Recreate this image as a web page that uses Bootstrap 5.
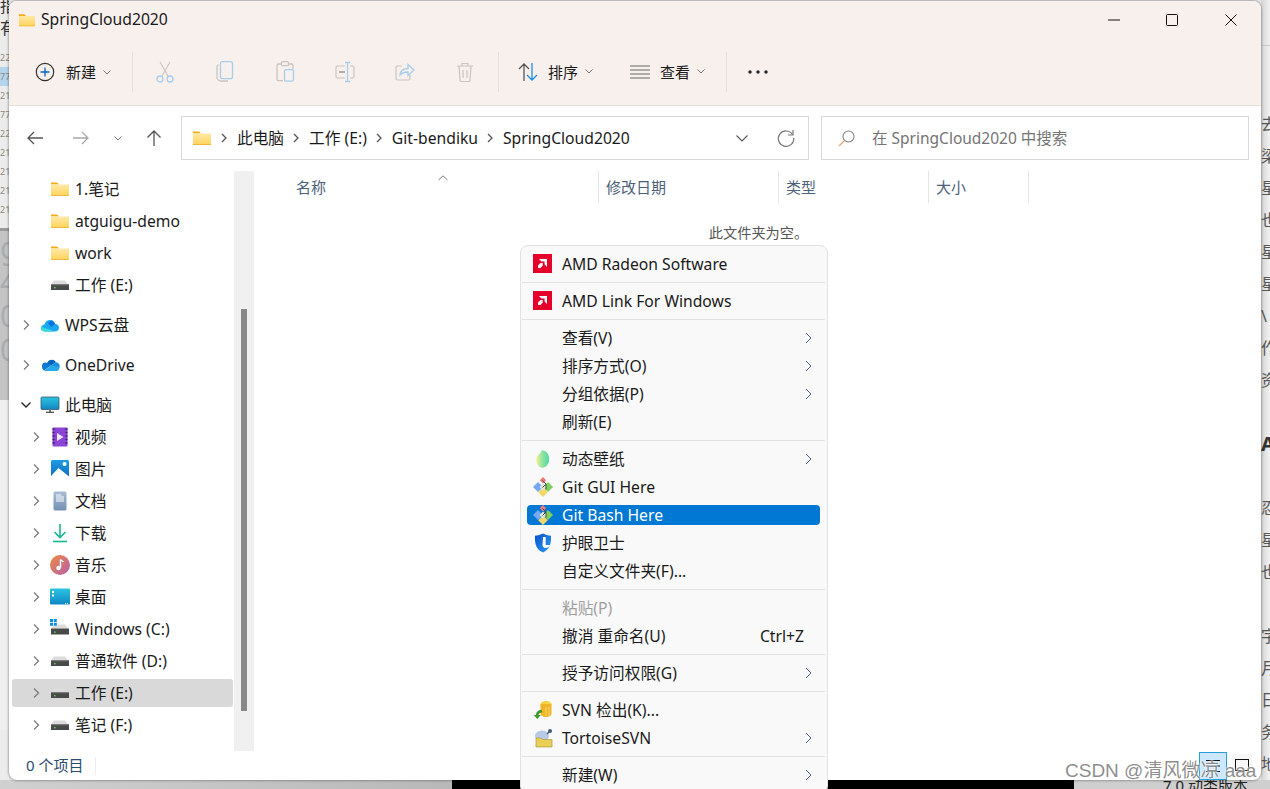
<!DOCTYPE html>
<html lang="zh-CN">
<head>
  <meta charset="UTF-8" />
  <meta name="viewport" content="width=device-width, initial-scale=1.0" />
  <title>SpringCloud2020</title>
  <link href="https://cdn.jsdelivr.net/npm/bootstrap@5.3.0/dist/css/bootstrap.min.css" rel="stylesheet">
  <style>
    html, body { height: 789px; overflow: hidden; }
    body { background: #e6e6e6; font-family: "Noto Sans", "Noto Sans CJK SC", sans-serif; font-size: 15.7px; color: #1a1a1a; }
    svg { display: block; flex: none; overflow: visible; }

    /* desktop behind the window */
    .desk { width: 1270px; height: 789px; position: relative; overflow: hidden; }
    .back-left { position: absolute; left: 0; top: 0; width: 9px; height: 789px; overflow: hidden; background: #ececec; white-space: nowrap; }
    .back-left div { overflow: hidden; }
    .frag-top { height: 53px; margin-top: -5px; font-size: 16px; line-height: 22px; color: #333; }
    .frag-num { height: 19px; font-size: 9px; line-height: 19px; color: #8d8a80; }
    .frag-sel { background: #b5d5ef; }
    .frag-gray { height: 172px; margin-top: 9px; background: #c4c4c4; border-top: 3px solid #9a9a9a; color: #a9adb2; font-size: 30px; line-height: 34px; }
    .frag-low { height: 330px; background: #f0f0f0; }
    .back-right { position: absolute; right: 0; top: 0; width: 9px; height: 789px; overflow: hidden; background: linear-gradient(90deg, #d4d4d4, #f2f2f2); color: #555; font-size: 16px; line-height: 32px; }
    .back-right div { height: 32px; }
    .back-right .rule-top { height: 46px; border-bottom: 1px solid #c8c8c8; margin-bottom: 62px; }
    .back-right b { font-size: 20px; color: #333; }
    .back-bottom { position: absolute; left: 0; bottom: 0; width: 1270px; height: 9px; display: flex; background: #bdbdbd; overflow: hidden; }
    .strip-gray { width: 452px; background: linear-gradient(90deg, #d0d0d0, #b8b8b8); }
    .strip-black { width: 622px; background: #000; }
    .strip-rest { flex: 1; background: #cfcfcf; font-size: 15px; line-height: 10px; color: #222; padding-left: 89px; white-space: nowrap; }

    /* explorer window */
    .win { position: absolute; left: 9px; top: 1px; width: 1252px; height: 779px; background: #fff; border-radius: 8px; box-shadow: 0 0 3px rgba(0,0,0,.55); overflow: hidden; display: flex; flex-direction: column; }
    .win-head { background: #f8f0ed; height: 105px; border-bottom: 1px solid #e4dedb; flex: none; }
    .title-row { height: 37px; padding: 0 1px 0 9px; }
    .title-text { margin-left: 5px; padding-top: 1px; }
    .win-ctl { width: 58.5px; height: 37px; }
    .tool-row { height: 67px; padding: 0 0 0 26px; font-size: 15px; }
    .tool-new { width: 97px; gap: 11px; }
    .tool-sep { width: 1px; height: 40px; background: #e6dfdc; flex: none; }
    .tool-ico { width: 60px; }
    .tool-first { margin-left: 2px; }
    .sep-b { margin-left: 3px; }
    .tool-cmd { gap: 10px; }
    .tool-new .tool-cmd, .tool-cmd span { padding-top: 2px; }
    .caret-mini { margin-left: -3px; }
    .cmd-sort { margin-left: 19px; }
    .cmd-view { margin-left: 37px; margin-right: 21px; }
    .more-dots { margin-left: 21px; }
    .addr-row { height: 65px; flex: none; padding-top: 10px; }
    .nav-a, .nav-b, .nav-c, .nav-d { height: 44px; }
    .nav-a { width: 52px; }
    .nav-b { width: 40px; }
    .nav-c { width: 34px; }
    .nav-d { width: 38px; margin-right: 8px; }
    .addr-box { width: 628px; height: 44px; border: 1px solid #d9d9d9; padding-left: 10px; }
    .addr-box span { padding-top: 2px; }
    .crumb { margin: 0 10px 0 9px; }
    .addr-drop { margin-right: 29px; }
    .addr-refresh { margin-right: 13px; }
    .search-box { width: 428px; height: 44px; border: 1px solid #d9d9d9; margin-left: 12px; padding-left: 16px; color: #757575; font-size: 15.5px; }
    .search-box span { margin-left: 17px; padding-top: 2px; }
    .win-body { flex: 1; min-height: 0; }
    .side { width: 225px; padding-top: 2px; flex: none; display: flex; flex-direction: column; }
    .tree-row { height: 28px; margin: 2px 0 2px 3px; padding-top: 2px; width: 221px; border-radius: 3px; flex: none; }
    .tree-row.lv0 { padding-left: 9px; }
    .tree-row.lv1 { padding-left: 19px; }
    .tree-row .chev-box { width: 10px; margin: -2px 9px 0 0; flex: none; }
    .tree-row .ico-box { width: 20px; margin: -2px 5px 0 0; flex: none; }
    .tree-row.on { background: #d9d9d9; }
    .group-gap { margin-top: 10px; }
    .scroll-track { width: 20px; background: #f0f0f0; padding: 138px 7px 40px; flex: none; }
    .scroll-thumb { width: 6px; height: 402px; background: #888; }
    .files { flex: 1; min-width: 0; padding-left: 2px; }
    .col-head { height: 32px; color: #4c607a; font-size: 15px; }
    .col-cell { border-right: 1px solid #e5e5e5; padding-left: 7px; display: flex; align-items: center; position: relative; }
    .col-name { width: 343px; padding-left: 40px; }
    .col-date { width: 180px; }
    .col-type { width: 150px; }
    .col-size { width: 100px; }
    .sort-up { position: absolute; left: 182px; top: 0; }
    .empty-note { font-size: 14.2px; color: #555; margin-top: 19px; }
    .status-bar { height: 29px; flex: none; padding-left: 17px; color: #2b4a6f; font-size: 15px; }
    .status-sep { width: 1px; height: 18px; background: #eee; margin-left: 12px; }
    .view-on { width: 28px; height: 28px; background: #cce8ff; border: 1px solid #2a9bdb; }
    .view-off { width: 20px; height: 24px; margin: 0 9px 0 5px; background: #f7f7f7; }

    /* context menu */
    .ctx { position: absolute; left: 520px; top: 245px; width: 308px; background: #f9f9f9; border: 1px solid #e2e2e2; border-radius: 8px; }
    .ctx-sec { padding: 4px 0; position: relative; display: flex; flex-direction: column; }
    .ctx-sec + .ctx-sec::before { content: ""; position: absolute; left: 1px; right: 2px; top: -1px; height: 1px; background: #e2e2e2; }
    .ctx-sec + .ctx-sec { margin-top: 1px; }
    .ctx-item { height: 20px; margin: 4px 7px 4px 6px; padding: 2px 8px 0 0; border-radius: 4px; flex: none; }
    .ctx-item > svg { margin-top: -2px; }
    .ctx-ico { width: 20px; margin: -2px 9px 0 6px; flex: none; }
    .ctx-item.hot { background: #0078d4; color: #fff; }
    .ctx-item.off { color: #a0a0a0; }
    .ctx-key { margin-right: 8px; }

    .mark-csdn { position: absolute; left: 1065px; top: 759px; font-family: "Liberation Sans", "Noto Sans CJK SC", sans-serif; font-size: 19px; line-height: 24px; color: rgba(120,120,120,.85); text-shadow: 0 0 2px #fff, 0 0 2px #fff; white-space: nowrap; }
  </style>
</head>
<body>

<svg width="0" height="0" class="position-absolute">
  <defs>
    <linearGradient id="g-folder" x1="0" y1="0" x2="0" y2="1"><stop offset="0" stop-color="#ffe9a6"/><stop offset="1" stop-color="#ffd35c"/></linearGradient>
    <linearGradient id="g-mon" x1="0" y1="0" x2="0" y2="1"><stop offset="0" stop-color="#2cc5e0"/><stop offset="1" stop-color="#0f86c4"/></linearGradient>
    <linearGradient id="g-music" x1="0" y1="0" x2="1" y2="1"><stop offset="0" stop-color="#f28a3c"/><stop offset="1" stop-color="#b25fb0"/></linearGradient>
    <linearGradient id="g-doc" x1="0" y1="0" x2="0" y2="1"><stop offset="0" stop-color="#a9bcd4"/><stop offset="1" stop-color="#7390b3"/></linearGradient>
    <linearGradient id="g-pic" x1="0" y1="0" x2="0" y2="1"><stop offset="0" stop-color="#1f9be4"/><stop offset="1" stop-color="#0f6cbc"/></linearGradient>
    <linearGradient id="g-leaf" x1="0" y1="0" x2="1" y2="0"><stop offset="0" stop-color="#f3f08a"/><stop offset=".55" stop-color="#7fe3a5"/><stop offset="1" stop-color="#58d8a0"/></linearGradient>
    <linearGradient id="g-shield" x1="0" y1="0" x2="1" y2="1"><stop offset="0" stop-color="#0a4fd0"/><stop offset="1" stop-color="#2aa0f0"/></linearGradient>
    <filter id="f-soft"><feGaussianBlur stdDeviation=".7"/></filter>

    <symbol id="i-folder" viewBox="0 0 20 20">
      <path d="M1 3.500h6l2 2H1z" fill="#f5ab16"/>
      <path d="M1 5.500h18v11.500H1z" fill="url(#g-folder)"/>
      <path d="M1 16h18v1H1z" fill="#f0b73a"/>
    </symbol>
    <symbol id="i-drive" viewBox="0 0 20 20">
      <path d="M3.500 5.500h11.500l3.500 4H1.500z" fill="#dcdcdc"/>
      <path d="M1 9h18v6H1z" fill="#4a4a4a"/>
      <path d="M1 9h18v1.200H1z" fill="#7a7a7a"/>
      <rect x="4" y="12" width="1.600" height="1.400" fill="#3fe04a"/>
    </symbol>
    <symbol id="i-win-drive" viewBox="0 0 20 20">
      <path d="M6 5.500h9l3.500 4H1.500l2-2.500z" fill="#dcdcdc"/>
      <path d="M1 9.500h18v6H1z" fill="#4a4a4a"/>
      <rect x="4" y="12.500" width="1.600" height="1.400" fill="#3fe04a"/>
      <path d="M0 0h3v3H0zM3.800 0h3v3h-3zM0 3.800h3v3H0zM3.800 3.800h3v3h-3z" fill="#0f8fe0"/>
    </symbol>
    <symbol id="i-wps" viewBox="0 0 20 20">
      <path d="M5 16.500c-5 0-5.500-6-.5-7 .8-3.500 5-6 8-3.500 1-.2 2.500 1 2.500 3 5-.5 5.500 7.500 0 7.500z" fill="#1aa8f0"/>
      <path d="M5 16.500c-3 0-5-3-3.500-5 3 2 8 2 12 5z" fill="#38d9d9"/>
      <path d="M8 8l4-3 3 4-4 3z" fill="#0a6fe0"/>
    </symbol>
    <symbol id="i-onedrive" viewBox="0 0 20 20">
      <path d="M7 8c1.500-4 7-4.500 9-.8l-5 3.300-4-1.700z" fill="#0364b8"/>
      <path d="M2 11c-.2-3 3-4.500 5.500-3l3.500 2.500-7 5c-1.500-.5-2-2.500-2-4.500z" fill="#0f78d4"/>
      <path d="M11 10.500l5-3.300c2.500.2 4 2.200 3.700 4.500L15 15z" fill="#1490df"/>
      <path d="M4 16c-.5 0 7-5.500 7-5.500l8.700 1.200c-.2 2-1 4.300-3.700 4.300z" fill="#28a8ea"/>
    </symbol>
    <symbol id="i-pc" viewBox="0 0 20 20">
      <rect x="1" y="2" width="18" height="12.500" rx="1" fill="url(#g-mon)" stroke="#3d5565" stroke-width=".8"/>
      <path d="M9 14.500h2v2.500H9z" fill="#6a7a88"/>
      <path d="M6 17.300h8" stroke="#444" stroke-width="1.200"/>
    </symbol>
    <symbol id="i-video" viewBox="0 0 20 20">
      <rect x="2.500" y="0.500" width="15" height="19" rx="1" fill="#8b44d6"/>
      <path d="M2.500 2h2M2.500 5.500h2M2.500 9h2M2.500 12.500h2M2.500 16h2M15.500 2h2M15.500 5.500h2M15.500 9h2M15.500 12.500h2M15.500 16h2" stroke="#3d1b72" stroke-width="1.400"/>
      <path d="M7 6l6.500 4L7 14z" fill="#efe6fb"/>
    </symbol>
    <symbol id="i-pic" viewBox="0 0 20 20">
      <rect x="1" y="1" width="18" height="18" rx="1.500" fill="url(#g-pic)"/>
      <circle cx="14.500" cy="5" r="2" fill="#fff"/>
      <path d="M1 17l7.500-8 10.500 8.500V19H1z" fill="#fff"/>
    </symbol>
    <symbol id="i-doc" viewBox="0 0 20 20">
      <rect x="3.500" y="0.500" width="13" height="19" rx="1.500" fill="url(#g-doc)"/>
      <path d="M6 4h5.500M6 6h8M6 8h8M6 10h8" stroke="#fff" stroke-width="1"/>
    </symbol>
    <symbol id="i-down" viewBox="0 0 20 20">
      <path d="M10 1v13M4.500 9l5.500 5.500L15.500 9" fill="none" stroke="#14b88e" stroke-width="1.600"/>
      <path d="M3 18.500h14" stroke="#14b88e" stroke-width="1.600"/>
    </symbol>
    <symbol id="i-music" viewBox="0 0 20 20">
      <circle cx="10" cy="10" r="10" fill="url(#g-music)"/>
      <path d="M10.500 4.500v8" stroke="#fff" stroke-width="1.500"/>
      <path d="M10.500 4.500c1 1.500 2.500 1.500 3 2.500" fill="none" stroke="#fff" stroke-width="1.300"/>
      <circle cx="8.500" cy="13" r="2.200" fill="#fff"/>
    </symbol>
    <symbol id="i-desk" viewBox="0 0 20 20">
      <rect x="0" y="1.500" width="20" height="16" rx="1" fill="url(#g-mon)"/>
      <path d="M2 4h2v2H2zM2 7.500h2v2H2z" fill="#fff"/>
      <path d="M15 16.500h1M17 16.500h1" stroke="#dff" stroke-width="1"/>
    </symbol>
    <symbol id="i-amd" viewBox="0 0 20 20">
      <rect width="19" height="19" fill="#e4002b"/>
      <path d="M6 5h8v8l-2.400-2.400V7.400H8.400z" fill="#fff"/>
      <path d="M5 11.500l2.500-2.500h2.200v2.500L7.500 14H5z" fill="#fff"/>
    </symbol>
    <symbol id="i-leaf" viewBox="0 0 20 20">
      <path d="M9 1c5 1 8 5 7 11-.8 5-5 7.500-8 6.500C5 17.500 3 14 3.500 9 4 7 6 5 7 4.500z" fill="url(#g-leaf)" filter="url(#f-soft)"/>
    </symbol>
    <symbol id="i-git" viewBox="0 0 20 20">
      <path d="M10 0l3.200 3.200-3.200 3.200-3.200-3.200z" fill="#f07a78"/>
      <path d="M5 5l5 5-5 5-5-5z" fill="#74a8f5"/>
      <path d="M15 5l5 5-5 5-5-5z" fill="#7fd05c"/>
      <path d="M10 10.500l4.800 4.800L10 20l-4.800-4.700z" fill="#f5d76a"/>
      <path d="M10 6.500l3.500 3.500L10 13.500 6.500 10z" fill="#dfe6d8"/>
      <path d="M9.500 3.500l3.500 3.500M13 7v5.500M13 7L9.500 10.500" fill="none" stroke="#4d4d4d" stroke-width="1"/>
    </symbol>
    <symbol id="i-shield" viewBox="0 0 20 20">
      <path d="M10 .5c2.500 1.300 5 2 8 2.300 .5 8-1.500 14-8 16.700C3.500 17 1.500 11 2 2.800c3-.3 5.500-1 8-2.300z" fill="url(#g-shield)"/>
      <path d="M10 4h2.700v8H17c-.5 2-2.500 3-4.500 3-2 0-3-1.500-3-3z" fill="#fff"/>
    </symbol>
    <symbol id="i-svn" viewBox="0 0 20 20">
      <ellipse cx="13" cy="4" rx="5.500" ry="3" fill="#f9d43c"/>
      <path d="M7.500 4v10c0 1.500 2.500 3 5.500 3s5.500-1.500 5.500-3V4z" fill="#efb526"/>
      <path d="M13 7v9M16 7v9" stroke="#f9e27a" stroke-width=".8"/>
      <path d="M9 10c-4 0-6 2-6 5H.8l3.500 4 3.500-4H5.500c0-1.500 1.500-2.500 3.500-2.500z" fill="#3b9a28"/>
    </symbol>
    <symbol id="i-tortoise" viewBox="0 0 20 20">
      <ellipse cx="9" cy="8" rx="7" ry="5.500" fill="#b7c9e4"/>
      <path d="M3 10h5l1.500 1.500H19V19H3z" fill="#e9cf55" stroke="#a79037" stroke-width=".6"/>
      <circle cx="17" cy="3" r="2" fill="#405a78"/>
      <path d="M14 6l2-2" stroke="#405a78" stroke-width="1.200"/>
    </symbol>
    <symbol id="i-sub" viewBox="0 0 7 12">
      <path d="M1 1l5 5-5 5" fill="none" stroke="#4a5f96" stroke-width="1"/>
    </symbol>
    <symbol id="i-tree" viewBox="0 0 10 12">
      <path d="M3 1.500L7.500 6 3 10.500" fill="none" stroke="#808080" stroke-width="1.400"/>
    </symbol>
    <symbol id="i-tree-open" viewBox="0 0 10 12">
      <path d="M.5 3.500L5 8l4.500-4.500" fill="none" stroke="#222" stroke-width="1.300"/>
    </symbol>
    <symbol id="i-caret" viewBox="0 0 8 5">
      <path d="M.5 .5L4 4 7.500 .5" fill="none" stroke="#777" stroke-width="1"/>
    </symbol>
    <symbol id="i-crumb" viewBox="0 0 6 10">
      <path d="M1 1l4 4-4 4" fill="none" stroke="#555" stroke-width="1.300"/>
    </symbol>
  </defs>
</svg>

<div class="desk">
  <div class="back-left">
    <div class="frag-top">指<br>有</div>
    <div class="frag-num">22,</div>
    <div class="frag-num frag-sel">77,</div>
    <div class="frag-num">21,</div>
    <div class="frag-num">77,</div>
    <div class="frag-num">22,</div>
    <div class="frag-num">21,</div>
    <div class="frag-num">21,</div>
    <div class="frag-num">21,</div>
    <div class="frag-num">21,</div>
    <div class="frag-gray">g<br>4<br>0<br>0</div>
    <div class="frag-low"></div>
  </div>
  <div class="back-right">
    <div class="rule-top"></div>
    <div>去</div><div>梁</div><div>星</div><div>也</div><div>星</div><div>星</div><div>\</div><div>作</div><div>资</div><div></div>
    <div><b>A</b></div><div></div><div>忍</div><div>星</div><div>也</div><div></div><div>字</div><div>月</div><div>日</div><div>务</div><div>地</div>
  </div>
  <div class="back-bottom">
    <div class="strip-gray"></div>
    <div class="strip-black"></div>
    <div class="strip-rest">7.0 动类版本</div>
  </div>

  <div class="win">
    <div class="win-head">
      <div class="title-row d-flex align-items-center">
        <svg width="18" height="18"><use href="#i-folder"/></svg>
        <span class="title-text flex-grow-1">SpringCloud2020</span>
        <div class="win-ctl d-flex align-items-center justify-content-center">
          <svg width="12" height="12" viewBox="0 0 12 12"><path d="M0 6h12" stroke="#111" stroke-width="1"/></svg>
        </div>
        <div class="win-ctl d-flex align-items-center justify-content-center">
          <svg width="12" height="12" viewBox="0 0 12 12"><rect x=".5" y=".5" width="11" height="11" rx="1" fill="none" stroke="#111"/></svg>
        </div>
        <div class="win-ctl d-flex align-items-center justify-content-center">
          <svg width="12" height="12" viewBox="0 0 12 12"><path d="M.5 .5l11 11M11.500 .5l-11 11" stroke="#111"/></svg>
        </div>
      </div>
      <div class="tool-row d-flex align-items-center">
        <div class="tool-new d-flex align-items-center">
          <svg width="20" height="20" viewBox="0 0 20 20"><circle cx="10" cy="10" r="8.700" fill="none" stroke="#333" stroke-width="1.200"/><path d="M10 5.500v9M5.500 10h9" stroke="#0067c0" stroke-width="1.300"/></svg>
          <span class="tool-cmd d-flex align-items-center">新建<svg width="8" height="5" class="caret-mini"><use href="#i-caret"/></svg></span>
        </div>
        <div class="tool-sep"></div>
        <div class="tool-ico tool-first d-flex justify-content-center">
          <svg width="20" height="22" viewBox="0 0 20 22"><path d="M5 1l8 14M15 1L7 15" stroke="#c9c4c1" stroke-width="1.100"/><circle cx="5" cy="18" r="3" fill="none" stroke="#a8cdea" stroke-width="1.300"/><circle cx="15" cy="18" r="3" fill="none" stroke="#a8cdea" stroke-width="1.300"/></svg>
        </div>
        <div class="tool-ico d-flex justify-content-center">
          <svg width="18" height="21" viewBox="0 0 18 21"><path d="M2.500 3.500C1.500 4 1 5 1 6v10c0 2 1.500 4 4 4h7" fill="none" stroke="#c9c4c1" stroke-width="1.300"/><rect x="4.500" y=".7" width="12" height="17" rx="2" fill="none" stroke="#a8cdea" stroke-width="1.300"/></svg>
        </div>
        <div class="tool-ico d-flex justify-content-center">
          <svg width="18" height="21" viewBox="0 0 18 21"><path d="M5 3H2.500C1.500 3 1 3.800 1 4.500V18c0 1 .8 1.700 1.500 1.700H7M13 3h2.500c.8 0 1.500.7 1.500 1.500V8" fill="none" stroke="#c9c4c1" stroke-width="1.300"/><rect x="5.500" y=".7" width="7" height="4" rx="1" fill="none" stroke="#c9c4c1" stroke-width="1.200"/><rect x="8.500" y="8.700" width="9" height="11.500" rx="1.500" fill="none" stroke="#a8cdea" stroke-width="1.300"/></svg>
        </div>
        <div class="tool-ico d-flex justify-content-center">
          <svg width="20" height="20" viewBox="0 0 20 20"><path d="M10 4H2.500C1.500 4 1 4.800 1 5.500v9c0 .8.500 1.500 1.500 1.500H10M15 4h2.500c1 0 1.500.8 1.500 1.500v9c0 .8-.5 1.500-1.500 1.500H15" fill="none" stroke="#c9c4c1" stroke-width="1.200"/><path d="M12.500 .5v19M10 .5h5M10 19.500h5" stroke="#a8cdea" stroke-width="1.300"/><path d="M4 10h6" stroke="#b0aca9" stroke-width="2"/></svg>
        </div>
        <div class="tool-ico d-flex justify-content-center">
          <svg width="20" height="20" viewBox="0 0 20 20"><path d="M7 4H2.500C1.500 4 1 4.800 1 5.500v11c0 1 .7 1.500 1.500 1.500h11c1 0 1.500-.7 1.500-1.500V13" fill="none" stroke="#c9c4c1" stroke-width="1.200"/><path d="M5 13c.5-4 3.500-6.500 8-6.500V2.500l6 5.500-6 5.500V10c-3.500 0-6 1-8 3z" fill="none" stroke="#a8cdea" stroke-width="1.300"/></svg>
        </div>
        <div class="tool-ico d-flex justify-content-center">
          <svg width="18" height="20" viewBox="0 0 18 20"><path d="M1 4h16M6 4V1.500h6V4M3 4l1 14.500c0 .7.500 1 1 1h8c.500 0 1-.3 1-1L15 4M7 8v8M11 8v8" fill="none" stroke="#c9c4c1" stroke-width="1.200"/></svg>
        </div>
        <div class="tool-sep sep-b"></div>
        <div class="tool-cmd cmd-sort d-flex align-items-center">
          <svg width="20" height="20" viewBox="0 0 20 20"><path d="M6 19V2M1 7l5-5 5 5" fill="none" stroke="#555" stroke-width="1.300"/><path d="M14 1v17M9 13l5 5 5-5" fill="none" stroke="#1f8fe0" stroke-width="1.300"/></svg>
          <span>排序</span>
          <svg width="8" height="5" class="caret-mini"><use href="#i-caret"/></svg>
        </div>
        <div class="tool-cmd cmd-view d-flex align-items-center">
          <svg width="20" height="14" viewBox="0 0 20 14"><path d="M0 1h20M0 5h20M0 9h20M0 13h20" stroke="#666" stroke-width="1.200"/></svg>
          <span>查看</span>
          <svg width="8" height="5" class="caret-mini"><use href="#i-caret"/></svg>
        </div>
        <div class="tool-sep"></div>
        <svg width="20" height="4" viewBox="0 0 20 4" class="more-dots"><circle cx="2" cy="2" r="1.700" fill="#222"/><circle cx="10" cy="2" r="1.700" fill="#222"/><circle cx="18" cy="2" r="1.700" fill="#222"/></svg>
      </div>
    </div>

    <div class="addr-row d-flex">
      <div class="nav-a d-flex align-items-center justify-content-center">
        <svg width="16" height="14" viewBox="0 0 16 14"><path d="M1 7h15M7 1L1 7l6 6" fill="none" stroke="#555" stroke-width="1.300"/></svg>
      </div>
      <div class="nav-b d-flex align-items-center justify-content-center">
        <svg width="16" height="14" viewBox="0 0 16 14"><path d="M0 7h15M9 1l6 6-6 6" fill="none" stroke="#a8a8a8" stroke-width="1.300"/></svg>
      </div>
      <div class="nav-c d-flex align-items-center justify-content-center">
        <svg width="8" height="5"><use href="#i-caret"/></svg>
      </div>
      <div class="nav-d d-flex align-items-center justify-content-center">
        <svg width="14" height="16" viewBox="0 0 14 16"><path d="M7 16V1M.5 7.500L7 1l6.500 6.500" fill="none" stroke="#555" stroke-width="1.300"/></svg>
      </div>
      <div class="addr-box d-flex align-items-center">
        <svg width="20" height="20"><use href="#i-folder"/></svg>
        <svg width="6" height="10" class="crumb"><use href="#i-crumb"/></svg>
        <span>此电脑</span>
        <svg width="6" height="10" class="crumb"><use href="#i-crumb"/></svg>
        <span>工作 (E:)</span>
        <svg width="6" height="10" class="crumb"><use href="#i-crumb"/></svg>
        <span>Git-bendiku</span>
        <svg width="6" height="10" class="crumb"><use href="#i-crumb"/></svg>
        <span class="flex-grow-1">SpringCloud2020</span>
        <svg width="12" height="7" viewBox="0 0 12 7" class="addr-drop"><path d="M.5 .5L6 6l5.500-5.500" fill="none" stroke="#555" stroke-width="1.100"/></svg>
        <svg width="18" height="18" viewBox="0 0 18 18" class="addr-refresh"><path d="M15.500 5.500A7.700 7.700 0 1 0 16.700 9" fill="none" stroke="#777" stroke-width="1.200"/><path d="M16 1v5h-5" fill="none" stroke="#777" stroke-width="1.200"/></svg>
      </div>
      <div class="search-box d-flex align-items-center">
        <svg width="17" height="17" viewBox="0 0 17 17"><circle cx="10.500" cy="6.500" r="5.500" fill="none" stroke="#808080" stroke-width="1.100"/><path d="M6.500 10.500L1 16" stroke="#d8a878" stroke-width="1.300"/></svg>
        <span>在 SpringCloud2020 中搜索</span>
      </div>
    </div>

    <div class="win-body d-flex">
      <div class="side">
        <div class="tree-row lv1 d-flex align-items-center"><div class="chev-box"></div><div class="ico-box"><svg width="20" height="20"><use href="#i-folder"/></svg></div>1.笔记</div>
        <div class="tree-row lv1 d-flex align-items-center"><div class="chev-box"></div><div class="ico-box"><svg width="20" height="20"><use href="#i-folder"/></svg></div>atguigu-demo</div>
        <div class="tree-row lv1 d-flex align-items-center"><div class="chev-box"></div><div class="ico-box"><svg width="20" height="20"><use href="#i-folder"/></svg></div>work</div>
        <div class="tree-row lv1 d-flex align-items-center"><div class="chev-box"></div><div class="ico-box"><svg width="20" height="20"><use href="#i-drive"/></svg></div>工作 (E:)</div>

        <div class="tree-row lv0 group-gap d-flex align-items-center"><div class="chev-box"><svg width="10" height="12"><use href="#i-tree"/></svg></div><div class="ico-box"><svg width="20" height="20"><use href="#i-wps"/></svg></div>WPS云盘</div>
        <div class="tree-row lv0 group-gap d-flex align-items-center"><div class="chev-box"><svg width="10" height="12"><use href="#i-tree"/></svg></div><div class="ico-box"><svg width="20" height="20"><use href="#i-onedrive"/></svg></div>OneDrive</div>
        <div class="tree-row lv0 group-gap d-flex align-items-center"><div class="chev-box"><svg width="10" height="12"><use href="#i-tree-open"/></svg></div><div class="ico-box"><svg width="20" height="20"><use href="#i-pc"/></svg></div>此电脑</div>

        <div class="tree-row lv1 d-flex align-items-center"><div class="chev-box"><svg width="10" height="12"><use href="#i-tree"/></svg></div><div class="ico-box"><svg width="20" height="20"><use href="#i-video"/></svg></div>视频</div>
        <div class="tree-row lv1 d-flex align-items-center"><div class="chev-box"><svg width="10" height="12"><use href="#i-tree"/></svg></div><div class="ico-box"><svg width="20" height="20"><use href="#i-pic"/></svg></div>图片</div>
        <div class="tree-row lv1 d-flex align-items-center"><div class="chev-box"><svg width="10" height="12"><use href="#i-tree"/></svg></div><div class="ico-box"><svg width="20" height="20"><use href="#i-doc"/></svg></div>文档</div>
        <div class="tree-row lv1 d-flex align-items-center"><div class="chev-box"><svg width="10" height="12"><use href="#i-tree"/></svg></div><div class="ico-box"><svg width="20" height="20"><use href="#i-down"/></svg></div>下载</div>
        <div class="tree-row lv1 d-flex align-items-center"><div class="chev-box"><svg width="10" height="12"><use href="#i-tree"/></svg></div><div class="ico-box"><svg width="20" height="20"><use href="#i-music"/></svg></div>音乐</div>
        <div class="tree-row lv1 d-flex align-items-center"><div class="chev-box"><svg width="10" height="12"><use href="#i-tree"/></svg></div><div class="ico-box"><svg width="20" height="20"><use href="#i-desk"/></svg></div>桌面</div>
        <div class="tree-row lv1 d-flex align-items-center"><div class="chev-box"><svg width="10" height="12"><use href="#i-tree"/></svg></div><div class="ico-box"><svg width="20" height="20"><use href="#i-win-drive"/></svg></div>Windows (C:)</div>
        <div class="tree-row lv1 d-flex align-items-center"><div class="chev-box"><svg width="10" height="12"><use href="#i-tree"/></svg></div><div class="ico-box"><svg width="20" height="20"><use href="#i-drive"/></svg></div>普通软件 (D:)</div>
        <div class="tree-row lv1 on d-flex align-items-center"><div class="chev-box"><svg width="10" height="12"><use href="#i-tree"/></svg></div><div class="ico-box"><svg width="20" height="20"><use href="#i-drive"/></svg></div>工作 (E:)</div>
        <div class="tree-row lv1 d-flex align-items-center"><div class="chev-box"><svg width="10" height="12"><use href="#i-tree"/></svg></div><div class="ico-box"><svg width="20" height="20"><use href="#i-drive"/></svg></div>笔记 (F:)</div>
      </div>
      <div class="scroll-track"><div class="scroll-thumb"></div></div>
      <div class="files">
        <div class="col-head d-flex">
          <div class="col-cell col-name">名称
            <svg width="10" height="6" viewBox="0 0 10 6" class="sort-up mt-1"><path d="M.5 5L5 .8 9.500 5" fill="none" stroke="#777"/></svg>
          </div>
          <div class="col-cell col-date">修改日期</div>
          <div class="col-cell col-type">类型</div>
          <div class="col-cell col-size">大小</div>
        </div>
        <div class="empty-note text-center">此文件夹为空。</div>
      </div>
    </div>

    <div class="status-bar d-flex align-items-center">
      <span>0 个项目</span>
      <div class="status-sep"></div>
      <div class="ms-auto d-flex align-items-center">
        <div class="view-on d-flex align-items-center justify-content-center">
          <svg width="14" height="14" viewBox="0 0 14 14"><path d="M0 1.500h14M0 7h14M0 12.500h14" stroke="#111" stroke-width="1"/></svg>
        </div>
        <div class="view-off d-flex align-items-center justify-content-center">
          <svg width="14" height="14" viewBox="0 0 14 14"><rect x=".5" y=".5" width="13" height="11" fill="none" stroke="#111"/></svg>
        </div>
      </div>
    </div>
  </div>

  <div class="ctx">
    <div class="ctx-sec">
      <div class="ctx-item d-flex align-items-center"><div class="ctx-ico"><svg width="20" height="20"><use href="#i-amd"/></svg></div>AMD Radeon Software</div>
    </div>
    <div class="ctx-sec">
      <div class="ctx-item d-flex align-items-center"><div class="ctx-ico"><svg width="20" height="20"><use href="#i-amd"/></svg></div>AMD Link For Windows</div>
    </div>
    <div class="ctx-sec">
      <div class="ctx-item d-flex align-items-center"><div class="ctx-ico"></div><span class="flex-grow-1">查看(V)</span><svg width="7" height="12"><use href="#i-sub"/></svg></div>
      <div class="ctx-item d-flex align-items-center"><div class="ctx-ico"></div><span class="flex-grow-1">排序方式(O)</span><svg width="7" height="12"><use href="#i-sub"/></svg></div>
      <div class="ctx-item d-flex align-items-center"><div class="ctx-ico"></div><span class="flex-grow-1">分组依据(P)</span><svg width="7" height="12"><use href="#i-sub"/></svg></div>
      <div class="ctx-item d-flex align-items-center"><div class="ctx-ico"></div>刷新(E)</div>
    </div>
    <div class="ctx-sec">
      <div class="ctx-item d-flex align-items-center"><div class="ctx-ico"><svg width="20" height="20"><use href="#i-leaf"/></svg></div><span class="flex-grow-1">动态壁纸</span><svg width="7" height="12"><use href="#i-sub"/></svg></div>
      <div class="ctx-item d-flex align-items-center"><div class="ctx-ico"><svg width="20" height="20"><use href="#i-git"/></svg></div>Git GUI Here</div>
      <div class="ctx-item hot d-flex align-items-center"><div class="ctx-ico"><svg width="20" height="20"><use href="#i-git"/></svg></div>Git Bash Here</div>
      <div class="ctx-item d-flex align-items-center"><div class="ctx-ico"><svg width="20" height="20"><use href="#i-shield"/></svg></div>护眼卫士</div>
      <div class="ctx-item d-flex align-items-center"><div class="ctx-ico"></div>自定义文件夹(F)...</div>
    </div>
    <div class="ctx-sec">
      <div class="ctx-item off d-flex align-items-center"><div class="ctx-ico"></div>粘贴(P)</div>
      <div class="ctx-item d-flex align-items-center"><div class="ctx-ico"></div><span class="flex-grow-1">撤消 重命名(U)</span><span class="ctx-key">Ctrl+Z</span></div>
    </div>
    <div class="ctx-sec">
      <div class="ctx-item d-flex align-items-center"><div class="ctx-ico"></div><span class="flex-grow-1">授予访问权限(G)</span><svg width="7" height="12"><use href="#i-sub"/></svg></div>
    </div>
    <div class="ctx-sec">
      <div class="ctx-item d-flex align-items-center"><div class="ctx-ico"><svg width="20" height="20"><use href="#i-svn"/></svg></div>SVN 检出(K)...</div>
      <div class="ctx-item d-flex align-items-center"><div class="ctx-ico"><svg width="20" height="20"><use href="#i-tortoise"/></svg></div><span class="flex-grow-1">TortoiseSVN</span><svg width="7" height="12"><use href="#i-sub"/></svg></div>
    </div>
    <div class="ctx-sec">
      <div class="ctx-item d-flex align-items-center"><div class="ctx-ico"></div><span class="flex-grow-1">新建(W)</span><svg width="7" height="12"><use href="#i-sub"/></svg></div>
    </div>
  </div>

  <div class="mark-csdn">CSDN @清风微凉 aaa</div>
</div>

</body>
</html>
